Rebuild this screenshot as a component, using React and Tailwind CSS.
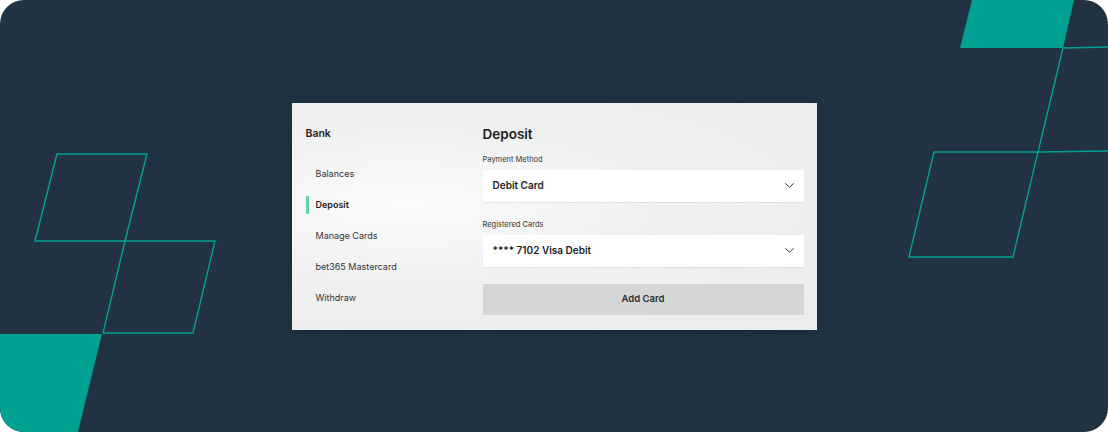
const NAV = ['Balances', 'Deposit', 'Manage Cards', 'bet365 Mastercard', 'Withdraw'];

function Chevron() {
    return (
        <svg width="9" height="5" viewBox="0 0 9 5" fill="none" className="shrink-0">
            <path d="M0.6 0.6l3.9 3.6 3.9-3.6" stroke="#3a3a3a" strokeWidth="1" strokeLinecap="round" strokeLinejoin="round" />
        </svg>
    );
}

function Decor() {
    const teal = '#00a093';
    return (
        <svg className="absolute inset-0 pointer-events-none" width="1108" height="432" viewBox="0 0 1108 432" fill="none">
            <polygon points="57,154 147,154 125,241 35,241" stroke={teal} strokeWidth="1.4" />
            <polygon points="125,241 215,241 193,333 103,333" stroke={teal} strokeWidth="1.4" />
            <polygon points="0,334 102,334 78,432 0,432" fill={teal} />
            <polygon points="972,0 1074,0 1063,48 960,48" fill={teal} />
            <polyline points="1108,47 1063,48 1038,152 1108,151" stroke={teal} strokeWidth="1.4" />
            <polygon points="934,152 1038,152 1013,257 909,257" stroke={teal} strokeWidth="1.4" />
        </svg>
    );
}

function Select({ value }) {
    return (
        <div className="h-[32px] bg-white flex items-center justify-between pl-[10px] pr-[10px] shadow-[0_1px_1px_rgba(0,0,0,0.06)]">
            <span className="text-[10px] font-semibold text-[#1d1d1d]">{value}</span>
            <Chevron />
        </div>
    );
}

export default function App() {
    return (
        <div className="w-[1108px] h-[432px] bg-white" style={{ fontFamily: 'Inter, "Noto Sans", sans-serif' }}>
            <div className="relative w-[1108px] h-[432px] overflow-hidden rounded-[24px] bg-[#213343] flex items-center justify-center">
                <Decor />
                <div className="relative w-[525px] h-[227px] flex bg-[radial-gradient(ellipse_at_22%_45%,#fbfbfb_0%,#eff0f0_45%,#ebecec_100%)] shadow-[0_2px_8px_rgba(0,0,0,0.25)]">
                    <aside className="w-[191px] shrink-0 pl-[14px] pt-[24px]">
                        <div className="h-[14px] leading-[14px] text-[10.5px] font-semibold text-[#1f1f1f]">Bank</div>
                        <nav className="mt-[17.5px] flex flex-col">
                            {NAV.map((item) => {
                                const active = item === 'Deposit';
                                return (
                                    <div key={item} className="h-[31px] flex items-center gap-[7px]">
                                        <span className={active ? 'w-[3px] h-[18px] bg-[#5ed6a6] rounded-[1px]' : 'w-[3px] h-[18px]'} />
                                        <span className={active ? 'text-[9px] font-semibold text-[#1d1d1d]' : 'text-[9px] text-[#333]'}>{item}</span>
                                    </div>
                                );
                            })}
                        </nav>
                    </aside>
                    <main className="flex-1 pr-[13px] pt-[23px] flex flex-col">
                        <h1 className="h-[17px] leading-[17px] text-[13.5px] font-semibold text-[#1d1d1d]">Deposit</h1>
                        <div className="mt-[12px] h-[10px] leading-[10px] text-[7.5px] text-[#333]">Payment Method</div>
                        <div className="mt-[5px]">
                            <Select value="Debit Card" />
                        </div>
                        <div className="mt-[18px] h-[10px] leading-[10px] text-[7.5px] text-[#333]">Registered Cards</div>
                        <div className="mt-[5px]">
                            <Select value="**** 7102 Visa Debit" />
                        </div>
                        <button className="mt-[17px] h-[31px] bg-[#d5d6d6] flex items-center justify-center text-[9.5px] font-semibold text-[#2b2b2b]">
                            Add Card
                        </button>
                    </main>
                </div>
            </div>
        </div>
    );
}
